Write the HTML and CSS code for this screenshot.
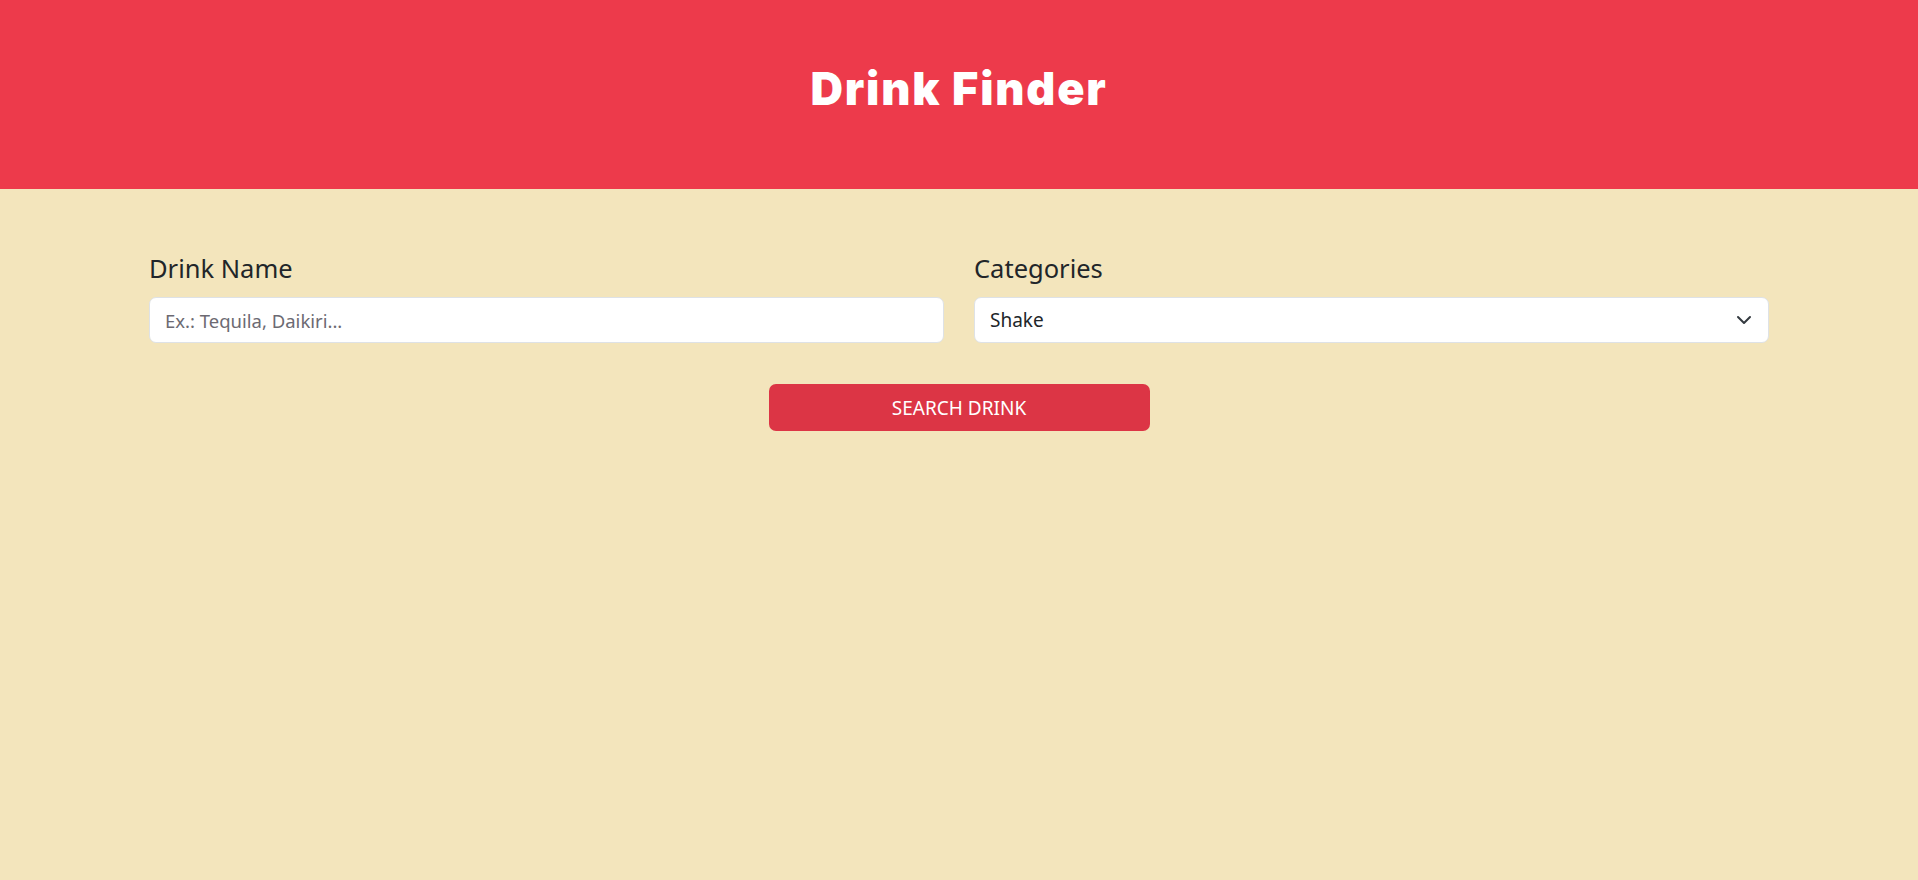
FILE: index.html
```html
<!DOCTYPE html>
<html lang="en">
<head>
<meta charset="utf-8">
<title>Drink Finder</title>
<link rel="stylesheet" href="styles.css">
</head>
<body>
<header class="site-header">
  <h1 class="site-title">Drink Finder</h1>
</header>
<main class="container">
  <form class="search-form">
    <div class="fields">
      <div class="field">
        <label class="field-label" for="name">Drink Name</label>
        <input class="field-input" id="name" type="text" placeholder="Ex.: Tequila, Daikiri...">
      </div>
      <div class="field">
        <label class="field-label" for="category">Categories</label>
        <div class="select-wrap">
          <div class="field-input select-box" id="category">Shake</div>
          <svg class="chevron" width="16" height="16" viewBox="0 0 16 16" aria-hidden="true"><path d="M2 5l6 6 6-6" fill="none" stroke="#343a40" stroke-width="2" stroke-linecap="round" stroke-linejoin="round"/></svg>
        </div>
      </div>
    </div>
    <div class="actions">
      <button class="search-btn" type="button">SEARCH DRINK</button>
    </div>
  </form>
</main>
</body>
</html>
```

FILE: styles.css
```css
* { box-sizing: border-box; }
html, body { margin: 0; padding: 0; }
body {
  background: #f3e5bc;
  font-family: "Noto Sans", "Open Sans", sans-serif;
  color: #212529;
  min-height: 880px;
}
.site-header {
  background: #ed3a4b;
  height: 189px;
  display: flex;
  align-items: center;
  justify-content: center;
}
.site-title {
  margin: 0 0 12px;
  color: #fff;
  font-family: Inter, "Noto Sans", sans-serif;
  font-weight: 900;
  font-size: 45px;
  letter-spacing: 1.8px;
  line-height: 1;
}
.container {
  width: 1650px;
  margin: 0 auto;
  padding: 61px 15px 0;
}
.fields {
  display: flex;
  gap: 30px;
}
.field { flex: 1; display: flex; flex-direction: column; }
.field-label {
  font-size: 25.5px;
  line-height: 37px;
  margin-bottom: 10px;
  color: #212529;
}
.field-input {
  height: 46px;
  border: 1px solid #dee2e6;
  border-radius: 7px;
  background: #fff;
  padding: 0 15px;
  font-family: inherit;
  font-size: 18.5px;
  color: #212529;
  outline: none;
  width: 100%;
}
.field-input::placeholder { color: #6c6a72; }
.select-wrap { position: relative; }
.select-box { display: flex; align-items: center; font-size: 19px; }
.chevron {
  position: absolute;
  right: 17px;
  top: 15px;
}
.actions {
  display: flex;
  justify-content: center;
  margin-top: 41px;
}
.search-btn {
  width: 381px;
  height: 47px;
  border: none;
  border-radius: 7px;
  background: #dc3545;
  color: #fff;
  font-family: inherit;
  font-size: 19px;
}
```
